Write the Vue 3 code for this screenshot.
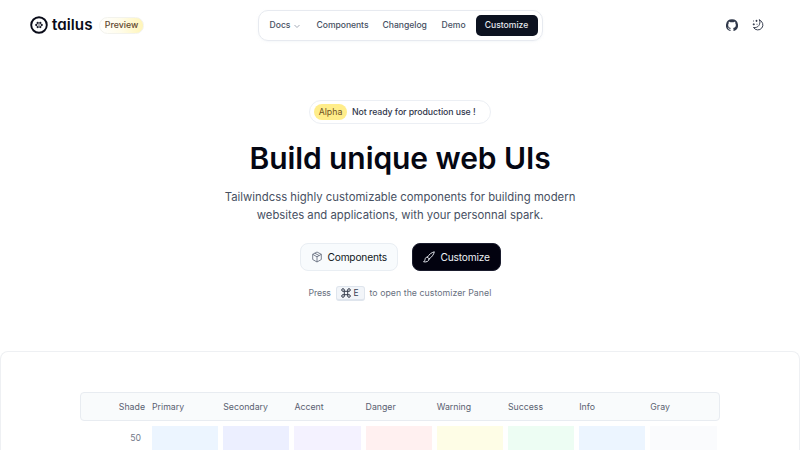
<script setup>
const columns = [
  { name: 'Primary', color: '#ecf5ff' },
  { name: 'Secondary', color: '#ecefff' },
  { name: 'Accent', color: '#f4f2ff' },
  { name: 'Danger', color: '#fff0f0' },
  { name: 'Warning', color: '#fefde6' },
  { name: 'Success', color: '#edfdf3' },
  { name: 'Info', color: '#ecf5ff' },
  { name: 'Gray', color: '#fafbfd' },
]
</script>

<template>
  <div class="page">
    <header class="header">
      <div class="brand">
        <svg class="mark" viewBox="0 0 18 18" fill="none">
          <circle cx="9" cy="9" r="7.8" stroke="#090b18" stroke-width="1.9" />
          <g fill="#1b1d2b">
            <circle cx="7.700" cy="6.900" r="1.150" /><circle cx="10.300" cy="6.900" r="1.150" />
            <circle cx="6.300" cy="9" r="1.150" /><circle cx="11.700" cy="9" r="1.150" />
            <circle cx="7.700" cy="11.100" r="1.150" /><circle cx="10.300" cy="11.100" r="1.150" />
            <circle cx="9" cy="9" r=".7" />
          </g>
        </svg>
        <span class="wordmark">tailus</span>
        <span class="preview">Preview</span>
      </div>
      <nav class="nav">
        <a class="docs">Docs
          <svg class="chevron" viewBox="0 0 8 8" fill="none" stroke="#a5abb8"><path d="M1.5 3 4 5.5 6.500 3" /></svg>
        </a>
        <a class="components">Components</a>
        <a class="changelog">Changelog</a>
        <a class="demo">Demo</a>
        <a class="nav-cta">Customize</a>
      </nav>
      <div class="tools">
        <svg viewBox="0 0 24 24" fill="#30384a"><path d="M12 .5a12 12 0 0 0-3.800 23.380c.6.120.820-.26.820-.580v-2.030c-3.340.73-4.040-1.610-4.040-1.610-.550-1.390-1.340-1.760-1.340-1.760-1.090-.740.080-.730.080-.730 1.200.080 1.840 1.240 1.840 1.240 1.070 1.830 2.810 1.300 3.490 1 .110-.780.420-1.300.760-1.600-2.660-.310-5.470-1.340-5.470-5.940 0-1.310.470-2.380 1.240-3.220-.120-.3-.540-1.520.120-3.180 0 0 1.010-.320 3.300 1.230a11.500 11.500 0 0 1 6 0c2.290-1.550 3.300-1.230 3.300-1.230.660 1.660.240 2.880.120 3.180.770.840 1.240 1.910 1.240 3.220 0 4.610-2.810 5.630-5.490 5.920.430.370.820 1.100.820 2.220v3.290c0 .320.220.7.830.580A12 12 0 0 0 12 .5Z" /></svg>
        <svg viewBox="0 0 24 24" fill="none" stroke="#30384a" stroke-width="1.900" stroke-linecap="round" stroke-linejoin="round">
          <path d="M15 2A10.200 10.200 0 1 1 3 17C12 19 18.500 10 15 2Z" />
          <path d="M3 4h.1M9 2.500v2.400M7.800 3.700h2.400M3.500 9.500v2.400M2.300 10.700h2.400M10 10.500h.1" />
        </svg>
      </div>
    </header>

    <main class="hero">
      <div class="notice"><span class="alpha">Alpha</span><span class="notice-text">Not ready for production use !</span></div>
      <h1>Build unique web UIs</h1>
      <p class="lead"><span class="line-one">Tailwindcss highly customizable components for building modern</span><br><span class="line-two">websites and applications, with your personnal spark.</span></p>
      <div class="actions">
        <a class="button light">
          <svg viewBox="0 0 12 12" fill="none" stroke="#596273" stroke-width=".8" stroke-linejoin="round"><path d="m6 1 4.300 2.300v5.200L6 11 1.700 8.500V3.300L6 1Z" /><path d="M1.700 3.300 6 5.800l4.300-2.500M6 5.800V11M3.800 2.200 8.200 4.600" /></svg>
          <span>Components</span>
        </a>
        <a class="button dark">
          <svg viewBox="0 0 12 12" fill="none" stroke="#e3e6ed" stroke-width="1" stroke-linecap="round" stroke-linejoin="round"><path d="M4.300 6.200C6 3.500 8.500 1.500 11.300.8c-.5 2.700-2.500 5.400-5.200 7.200M4.300 6.200c.9.300 1.500.9 1.800 1.800M4.300 6.200C2.700 6.100 2.300 7 2.100 8.300c-.1 1-.6 1.700-1.500 2.500 2.700.5 5.400-.2 5.500-2.800" /></svg>
          <span>Customize</span>
        </a>
      </div>
      <div class="hint">
        <span class="press">Press</span>
        <kbd>
          <svg viewBox="0 0 10 10" fill="none" stroke="#353c4b" stroke-width="1"><path d="M3.300 3.300V2A1.300 1.300 0 1 0 2 3.300h6A1.300 1.300 0 1 0 6.700 2v6A1.300 1.300 0 1 0 8 6.700H2A1.300 1.300 0 1 0 3.300 8V3.300" /></svg>
          <span>E</span>
        </kbd>
        <span class="rest">to open the customizer Panel</span>
      </div>
    </main>

    <section class="panel">
      <div class="table">
        <div class="row head">
          <span class="shade">Shade</span>
          <span v-for="c in columns" :key="c.name">{{ c.name }}</span>
        </div>
        <div class="row swatches">
          <span class="value">50</span>
          <i v-for="c in columns" :key="c.name" :style="{ background: c.color }"></i>
        </div>
      </div>
    </section>
  </div>
</template>

<style>
body { background: #fff; overflow: hidden; }
</style>

<style scoped>
* { box-sizing: border-box; }
.page { width: 800px; height: 450px; overflow: hidden; font-family: Inter, "Liberation Sans", sans-serif; color: #475062; white-space: nowrap; }
svg { display: block; flex: none; }
.header { height: 50px; display: grid; grid-template-columns: 227.500px 285px 1fr; padding: 0 36.500px 0 30px; align-items: center; }
.brand { display: flex; align-items: center; }
.mark { width: 18px; height: 18px; }
.wordmark { width: 41px; margin-left: 4px; font: 600 15.200px/20px Inter, sans-serif; font-feature-settings: "cv11"; letter-spacing: .05px; color: #090b18; }
.preview { width: 45px; height: 17px; margin-left: 6px; border: 1px solid #f3f3ed; border-radius: 9px; background: linear-gradient(90deg, #fff, #fffce8 50%, #fff5b8); font-size: 8.800px; font-weight: 500; line-height: 14px; text-align: center; color: #62492f; }
.nav { height: 31px; display: flex; align-items: center; border: 1px solid #e7eaf0; border-radius: 10px; padding-left: 11px; font-size: 8.600px; font-weight: 500; box-shadow: 0 1px 2px #eef1f580; }
.docs { width: 47px; display: flex; align-items: center; gap: 3px; }
.chevron { width: 8px; height: 8px; margin-top: 2px; }
.components { width: 66px; letter-spacing: -.05px; }
.changelog { width: 59px; letter-spacing: -.02px; }
.demo { width: 34px; }
.nav-cta { width: 62px; height: 21px; border-radius: 5px; background: #0c1220; color: #e5e8ef; text-align: center; line-height: 21px; }
.tools { display: flex; justify-content: flex-end; gap: 14px; }
.tools svg { width: 12px; height: 12px; }
.hero { height: 301px; padding-top: 50px; display: flex; flex-direction: column; align-items: center; }
.notice { width: 182px; height: 24px; border: 1px solid #eceff4; border-radius: 12px; padding-left: 4px; display: flex; align-items: center; font-size: 8.750px; font-weight: 500; color: #30364b; }
.alpha { width: 33px; height: 16px; border-radius: 8px; background: #ffed8a; color: #705324; font-weight: 400; text-align: center; line-height: 16px; }
.notice-text { margin-left: 5px; letter-spacing: -.06px; }
h1 { margin: 15px 0 0; font-size: 30px; line-height: 38px; font-weight: 600; letter-spacing: -.08px; color: #050713; }
.lead { margin: 12px 0 0; font-size: 11.300px; line-height: 17.500px; text-align: center; }
.line-one { letter-spacing: .025px; }
.actions { height: 28px; display: flex; gap: 14px; margin-top: 19px; }
.button { display: flex; align-items: center; border-radius: 8px; font-size: 10.200px; letter-spacing: -.2px; padding: 0 10px; gap: 5px; }
.button svg { width: 12px; height: 12px; }
.light { width: 98px; background: #f8fbfd; border: 1px solid #e9eef3; color: #111722; }
.dark { width: 89px; background: #02020f; border: 1px solid #1a1c2d; color: #edf0f5; gap: 6px; }
.hint { width: 183px; height: 16px; margin-top: 14px; display: flex; align-items: center; font-size: 8.750px; color: #687080; }
.press { width: 27px; letter-spacing: -.15px; }
.rest { letter-spacing: .05px; }
kbd { width: 29px; height: 15px; margin-right: 5px; border: 1px solid #dfe5ed; border-bottom-width: 2px; border-radius: 3px; background: #f2f5f9; display: flex; align-items: center; justify-content: center; gap: 2px; font: 8.500px/12px Inter, sans-serif; color: #394151; }
kbd svg { width: 10px; height: 10px; }
.panel { height: 110px; border: 1px solid #eef0f3; border-bottom: 0; border-radius: 8px 8px 0 0; padding: 40px 79px 0; }
.row { display: grid; grid-template-columns: 66px repeat(8, 66.200px); column-gap: 5px; }
.head { height: 29px; border: 1px solid #e8ecf1; border-radius: 4px; background: #f9fbfc; align-items: center; font-size: 8.750px; color: #596171; }
.shade { text-align: right; padding-right: 2px; }
.swatches { height: 24px; margin-top: 5px; padding-left: 1px; }
.value { padding: 7px 6px 0 0; text-align: right; font-size: 8.750px; color: #727988; }
</style>
